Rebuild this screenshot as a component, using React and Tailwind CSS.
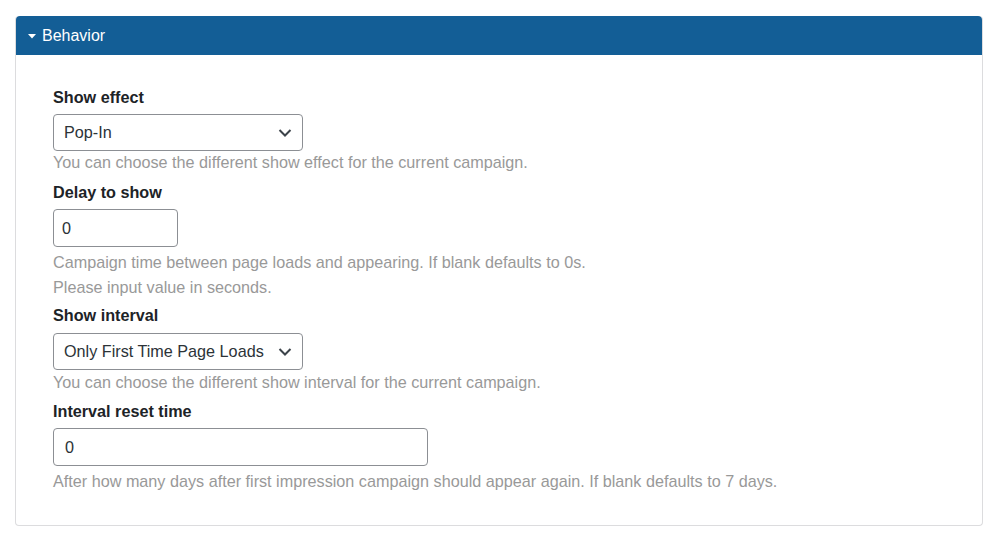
import React from "react";

function Chevron() {
  return (
    <svg width="14" height="9" viewBox="0 0 14 9" className="absolute right-[10px] top-1/2 -translate-y-1/2">
      <path d="M1.5 1.5 L7 7 L12.5 1.5" fill="none" stroke="#3c434a" strokeWidth="2" />
    </svg>
  );
}

export default function App() {
  return (
    <div className="bg-white w-[1000px] h-[540px] pt-4 px-[15px]" style={{ fontFamily: '"Liberation Sans", Arial, sans-serif' }}>
      <div className="w-[968px] h-[510px] rounded-[4px] border border-[#dcdcde] border-t-0 flex flex-col">
        <div className="h-[39px] bg-[#135e96] rounded-t-[4px] flex items-center pl-[12px] text-white">
          <svg width="8" height="5" viewBox="0 0 8 5" className="mr-[6px] mt-[1px]"><path d="M0 0 H8 L4 4.5 Z" fill="#fff" /></svg>
          <span className="text-[16px]">Behavior</span>
        </div>
        <div className="pl-[37px] pt-[32px] flex flex-col text-[16.2px]">
          <div className="font-bold text-[#1d2327] leading-[20px]">Show effect</div>
          <div className="mt-[7px] relative h-[37px] w-[250px] rounded-[4px] border border-[#8c8f94] bg-white flex items-center pl-[10px]">
            <span className="text-[#2c3338]">Pop-In</span>
            <Chevron />
          </div>
          <div className="text-[#999999] leading-[23px]">You can choose the different show effect for the current campaign.</div>
          <div className="mt-[8px] font-bold text-[#1d2327] leading-[20px]">Delay to show</div>
          <div className="mt-[7px] h-[38px] w-[125px] rounded-[4px] border border-[#8c8f94] flex items-center pl-[8px] text-[#2c3338]">0</div>
          <div className="mt-[3px] text-[#999999] leading-[25px]">Campaign time between page loads and appearing. If blank defaults to 0s.</div>
          <div className="text-[#999999] leading-[25px]">Please input value in seconds.</div>
          <div className="mt-[5px] font-bold text-[#1d2327] leading-[20px]">Show interval</div>
          <div className="mt-[8px] relative h-[37px] w-[250px] rounded-[4px] border border-[#8c8f94] bg-white flex items-center pl-[10px]">
            <span className="text-[#2c3338]">Only First Time Page Loads</span>
            <Chevron />
          </div>
          <div className="text-[#999999] leading-[24px]">You can choose the different show interval for the current campaign.</div>
          <div className="mt-[7px] font-bold text-[#1d2327] leading-[20px]">Interval reset time</div>
          <div className="mt-[7px] h-[38px] w-[375px] rounded-[4px] border border-[#8c8f94] flex items-center pl-[11px] text-[#2c3338]">0</div>
          <div className="mt-[3px] text-[#999999] leading-[24px]">After how many days after first impression campaign should appear again. If blank defaults to 7 days.</div>
        </div>
      </div>
    </div>
  );
}
